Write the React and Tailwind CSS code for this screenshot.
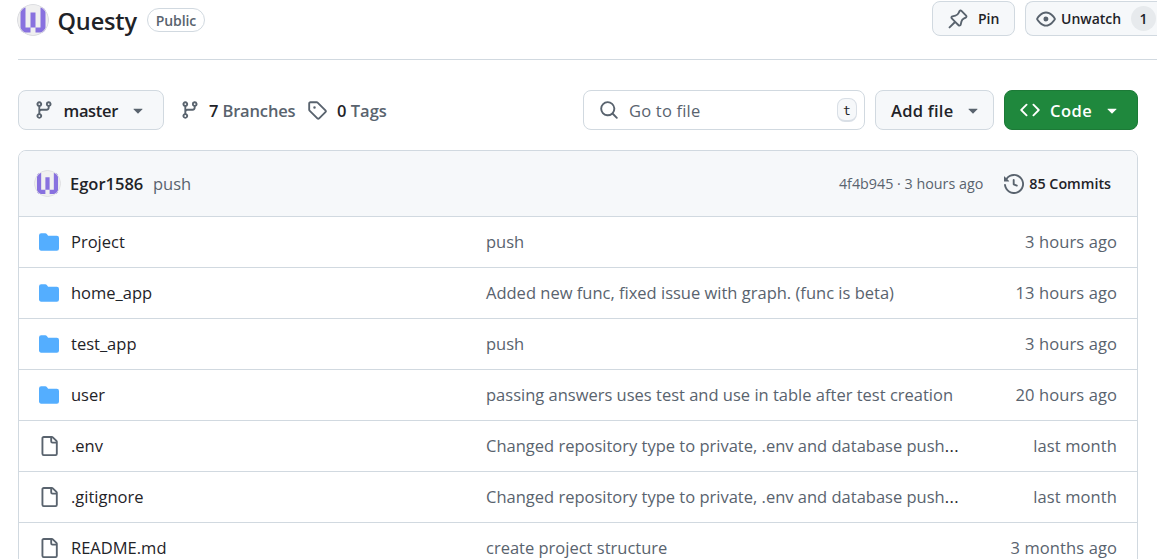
import React from "react";

const PATHS = {
  branch:
    "M9.5 3.25a2.25 2.25 0 1 1 3 2.122V6A2.5 2.5 0 0 1 10 8.5H6a1 1 0 0 0-1 1v1.128a2.251 2.251 0 1 1-1.5 0V5.372a2.25 2.25 0 1 1 1.5 0v1.836A2.493 2.493 0 0 1 6 7h4a1 1 0 0 0 1-1v-.628A2.25 2.25 0 0 1 9.5 3.25Zm-6 0a.75.75 0 1 0 1.5 0 .75.75 0 0 0-1.5 0Zm8.25-.75a.75.75 0 1 0 0 1.5.75.75 0 0 0 0-1.5ZM4.25 12a.75.75 0 1 0 0 1.5.75.75 0 0 0 0-1.5Z",
  tag: "M1 7.775V2.75C1 1.784 1.784 1 2.75 1h5.025c.464 0 .91.184 1.238.513l6.25 6.25a1.75 1.75 0 0 1 0 2.474l-5.026 5.026a1.75 1.75 0 0 1-2.474 0l-6.25-6.25A1.752 1.752 0 0 1 1 7.775Zm1.5 0c0 .066.026.13.073.177l6.25 6.25a.25.25 0 0 0 .354 0l5.025-5.025a.25.25 0 0 0 0-.354l-6.25-6.25a.25.25 0 0 0-.177-.073H2.75a.25.25 0 0 0-.25.25ZM6 5a1 1 0 1 1 0 2 1 1 0 0 1 0-2Z",
  search:
    "M10.68 11.74a6 6 0 0 1-7.922-8.982 6 6 0 0 1 8.982 7.922l3.04 3.04a.749.749 0 0 1-.326 1.275.749.749 0 0 1-.734-.215ZM11.5 7a4.499 4.499 0 1 0-8.997 0A4.499 4.499 0 0 0 11.5 7Z",
  eye: "M8 2c1.981 0 3.671.992 4.933 2.078 1.27 1.091 2.187 2.345 2.637 3.023a1.62 1.62 0 0 1 0 1.798c-.45.678-1.367 1.932-2.637 3.023C11.67 13.008 9.981 14 8 14c-1.981 0-3.671-.992-4.933-2.078C1.797 10.83.88 9.576.43 8.898a1.62 1.62 0 0 1 0-1.798c.45-.677 1.367-1.931 2.637-3.022C4.33 2.992 6.019 2 8 2ZM1.679 7.932a.12.12 0 0 0 0 .136c.411.622 1.241 1.75 2.366 2.717C5.176 11.758 6.527 12.5 8 12.5c1.473 0 2.825-.742 3.955-1.715 1.124-.967 1.954-2.096 2.366-2.717a.12.12 0 0 0 0-.136c-.412-.621-1.242-1.75-2.366-2.717C10.824 4.242 9.473 3.5 8 3.5c-1.473 0-2.825.742-3.955 1.715-1.124.967-1.954 2.096-2.366 2.717ZM8 10a2 2 0 1 1-.001-3.999A2 2 0 0 1 8 10Z",
  pin: "m11.294.984 3.722 3.722a1.75 1.75 0 0 1-.504 2.826l-1.327.613a3.089 3.089 0 0 0-1.707 2.084l-.584 2.454c-.317 1.332-1.972 1.8-2.94.832L5.75 11.311 1.78 15.28a.749.749 0 1 1-1.06-1.06l3.969-3.97-2.204-2.204c-.968-.968-.5-2.623.832-2.94l2.454-.584a3.08 3.08 0 0 0 2.084-1.707l.613-1.327a1.75 1.75 0 0 1 2.826-.504ZM6.283 9.723l2.732 2.731a.25.25 0 0 0 .42-.119l.584-2.454a4.586 4.586 0 0 1 2.537-3.098l1.328-.613a.25.25 0 0 0 .072-.404l-3.722-3.722a.25.25 0 0 0-.404.072l-.613 1.328a4.584 4.584 0 0 1-3.098 2.537l-2.454.584a.25.25 0 0 0-.119.42l2.731 2.732Z",
  code: "m11.28 3.22 4.25 4.25a.75.75 0 0 1 0 1.06l-4.25 4.25a.749.749 0 0 1-1.275-.326.749.749 0 0 1 .215-.734L13.94 8l-3.72-3.72a.749.749 0 0 1 .326-1.275.749.749 0 0 1 .734.215Zm-6.56 0a.751.751 0 0 1 1.042.018.751.751 0 0 1 .018 1.042L2.06 8l3.72 3.72a.749.749 0 0 1-.326 1.275.749.749 0 0 1-.734-.215L.47 8.53a.75.75 0 0 1 0-1.06Z",
  history:
    "m.427 1.927 1.215 1.215a8.002 8.002 0 1 1-1.6 5.685.75.75 0 1 1 1.493-.154 6.5 6.5 0 1 0 1.18-4.458l1.358 1.358A.25.25 0 0 1 3.896 6H.25A.25.25 0 0 1 0 5.75V2.104a.25.25 0 0 1 .427-.177ZM7.75 4a.75.75 0 0 1 .75.75v2.992l2.028.812a.75.75 0 0 1-.557 1.392l-2.5-1A.751.751 0 0 1 7 8.25v-3.5A.75.75 0 0 1 7.75 4Z",
  file: "M2 1.75C2 .784 2.784 0 3.75 0h6.586c.464 0 .909.184 1.237.513l2.914 2.914c.329.328.513.773.513 1.237v9.586A1.75 1.75 0 0 1 13.25 16h-9.5A1.75 1.75 0 0 1 2 14.25Zm1.75-.25a.25.25 0 0 0-.25.25v12.5c0 .138.112.25.25.25h9.5a.25.25 0 0 0 .25-.25V6h-2.75A1.75 1.75 0 0 1 9 4.25V1.5Zm6.75.062V4.25c0 .138.112.25.25.25h2.688l-.011-.013-2.914-2.914-.013-.011Z",
  folder:
    "M1.75 1A1.75 1.75 0 0 0 0 2.75v10.5C0 14.216.784 15 1.75 15h12.5A1.75 1.75 0 0 0 16 13.25v-8.5A1.75 1.75 0 0 0 14.25 3H7.5a.25.25 0 0 1-.2-.1l-.9-1.2C6.07 1.26 5.55 1 5 1H1.75Z",
  caret:
    "m4.427 7.427 3.396 3.396a.25.25 0 0 0 .354 0l3.396-3.396A.25.25 0 0 0 11.396 7H4.604a.25.25 0 0 0-.177.427Z",
};

function Icon({ name, className = "text-[#59636e]" }) {
  return (
    <svg viewBox="0 0 16 16" className={`size-5 shrink-0 fill-current ${className}`}>
      <path d={PATHS[name]} />
    </svg>
  );
}

function Avatar({ className }) {
  return (
    <svg viewBox="0 0 32 32" className={`shrink-0 rounded-full ${className}`}>
      <circle cx="16" cy="16" r="16" fill="#f0f0f0" />
      <path
        d="M3.500 3.500h5v20h5v5h-10zM28.500 3.500h-5v20h-5v5h10zM13.500 8.500h5v15h-5z"
        fill="#8871df"
      />
      <circle cx="16" cy="16" r="15.500" fill="none" stroke="#dcdde1" strokeWidth="1.100" />
    </svg>
  );
}

const ROWS = [
  ["folder", "Project", "push", "3 hours ago"],
  ["folder", "home_app", "Added new func, fixed issue with graph. (func is beta)", "13 hours ago"],
  ["folder", "test_app", "push", "3 hours ago"],
  ["folder", "user", "passing answers uses test and use in table after test creation", "20 hours ago"],
  ["file", ".env", "Changed repository type to private, .env and database push", "last month", true],
  ["file", ".gitignore", "Changed repository type to private, .env and database push", "last month", true],
  ["file", "README.md", "create project structure", "3 months ago"],
];

function Row({ row }) {
  const [icon, name, message, age, cut] = row;
  return (
    <div className="flex h-[51px] shrink-0 items-center border-b border-[#d1d9e0] pr-5 pl-5">
      <Icon name={icon} className={icon === "folder" ? "text-[#54aeff]" : "text-[#59636e]"} />
      <span className="ml-3 w-[415px]">{name}</span>
      <span className="flex-1 text-[#59636e]">
        {message}
        {cut && <span className="tracking-[0.5px] text-[#1f2328]">...</span>}
      </span>
      <span className="tracking-[0.1px] text-[#59636e]">{age}</span>
    </div>
  );
}

export default function App() {
  return (
    <div className="h-[559px] w-[1157px] overflow-hidden bg-white font-['Open_Sans',sans-serif] text-[16.5px] leading-6 whitespace-nowrap text-[#1f2328]">
      <header className="ml-[18px] flex h-[60px] items-start border-b border-[#d1d9e0]">
        <Avatar className="-ml-px mt-1 size-8" />
        <h1 className="mt-[5px] ml-[8.5px] w-[89.5px] text-[23.5px] leading-8 font-semibold tracking-[-0.15px]">
          Questy
        </h1>
        <span className="mt-2 flex h-6 w-[58px] items-center justify-center rounded-full border border-[#d1d9e0] pt-px text-[14px] font-semibold tracking-[-0.1px] text-[#59636e]">
          Public
        </span>
        <div className="ml-auto flex gap-2.5 pt-px text-[14px] font-semibold">
          <button className="flex h-[35px] w-[83px] items-center rounded-lg border border-[#d1d9e0] bg-[#f6f8fa] pl-[15px]">
            <Icon name="pin" />
            <span className="ml-[10px]">Pin</span>
          </button>
          <button className="flex h-[35px] w-[132px] items-center rounded-l-lg border border-r-0 border-[#d1d9e0] bg-[#f6f8fa] pl-[10px]">
            <Icon name="eye" />
            <span className="ml-[5px] w-[70px] text-left">Unwatch</span>
            <span className="flex size-[25px] items-center justify-center rounded-full bg-[#e7eaed]">1</span>
          </button>
        </div>
      </header>

      <div className="mt-[30px] ml-[18px] flex h-10 w-[1120px] items-center">
        <button className="flex h-10 w-[146px] items-center rounded-lg border border-[#d1d9e0] bg-[#f6f8fa] pl-[15px] font-semibold">
          <Icon name="branch" />
          <span className="ml-[9.5px] w-[64.5px] pt-px text-left tracking-[-0.35px]">master</span>
          <Icon name="caret" />
        </button>
        <div className="ml-4 flex items-center font-semibold">
          <Icon name="branch" />
          <span className="ml-[9px] w-[98px] pt-px tracking-[-0.15px]">
            7 <span className="text-[#59636e]">Branches</span>
          </span>
          <Icon name="tag" />
          <span className="ml-[10px] pt-px">
            0 <span className="text-[#59636e]">Tags</span>
          </span>
        </div>
        <div className="ml-auto flex h-10 w-[282px] items-center rounded-lg border border-[#d1d9e0] pr-[7px] pl-[15px]">
          <Icon name="search" />
          <span className="ml-[10px] flex-1 pt-px tracking-[0.2px] text-[#59636e]">Go to file</span>
          <kbd className="flex h-6 w-5 items-center justify-center rounded-lg border border-b-2 border-[#d9dfe6] bg-[#f6f8fa] pt-[2px] font-['DejaVu_Sans_Mono',monospace] text-[13px]">
            t
          </kbd>
        </div>
        <button className="ml-[10px] flex h-10 w-[119px] items-center rounded-lg border border-[#d1d9e0] bg-[#f6f8fa] pl-[15px] font-semibold">
          <span className="w-[72px] pt-px text-left tracking-[0.25px]">Add file</span>
          <Icon name="caret" />
        </button>
        <button className="ml-[10px] flex h-10 w-[134px] items-center rounded-lg border border-[#1c7a37] bg-[#1f883d] pl-[15px] font-semibold text-white">
          <Icon name="code" className="text-white" />
          <span className="ml-[10px] w-[52px] pt-px text-left tracking-[0.5px]">Code</span>
          <Icon name="caret" className="text-white" />
        </button>
      </div>

      <main className="mt-5 ml-[18px] w-[1120px] rounded-t-lg border border-[#d1d9e0]">
        <div className="flex h-[66px] items-center rounded-t-[7px] border-b border-[#d1d9e0] bg-[#f6f8fa] pr-[26px] pl-[15px]">
          <Avatar className="size-[27px]" />
          <span className="ml-[9px] w-[83px] font-semibold">Egor1586</span>
          <span className="flex-1 text-[#59636e]">push</span>
          <span className="text-[14.3px] text-[#59636e]">4f4b945 · 3 hours ago</span>
          <Icon name="history" className="ml-[21px] text-[#59636e]" />
          <span className="ml-[5px] text-[14.3px] font-semibold">85 Commits</span>
        </div>
        {ROWS.map((row) => (
          <Row key={row[1]} row={row} />
        ))}
      </main>
    </div>
  );
}
